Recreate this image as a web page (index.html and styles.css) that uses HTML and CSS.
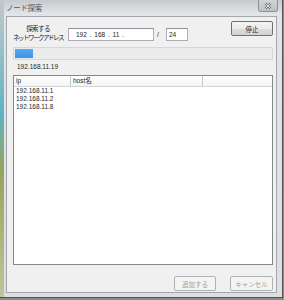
FILE: index.html
```html
<!DOCTYPE html>
<html lang="ja">
<head>
    <meta charset="UTF-8">
    <title>ノード探索</title>
    <link rel="stylesheet" href="styles.css">
</head>
<body>
    <div class="window">
        <div class="titlebar">
            <span class="title">ノード探索</span>
            <span class="close">
                <svg width="20" height="12" viewBox="0 0 20 12">
                    <path d="M7 3 L13 9 M13 3 L7 9" stroke="#6d6d6d" stroke-width="2.4" fill="none"/>
                    <path d="M7 3 L13 9 M13 3 L7 9" stroke="#f4f4f4" stroke-width="1" fill="none"/>
                </svg>
            </span>
        </div>
        <div class="client">
            <div class="top-row">
                <div class="label">探索する<br><span class="narrow">ネットワークアドレス</span></div>
                <div class="textbox ip-box">192 . 168 . 11 .</div>
                <span class="slash">/</span>
                <div class="textbox mask-box">24</div>
                <button class="btn stop">停止</button>
            </div>
            <div class="progress"><div class="bar" style="width: 18px"></div></div>
            <div class="status">192.168.11.19</div>
            <div class="listview">
                <div class="lv-head">
                    <span class="col col-ip">ip</span>
                    <span class="col col-host">host名</span>
                    <span class="col col-rest"></span>
                </div>
                <div class="lv-rows">
                    <div class="lv-row">192.168.11.1</div>
                    <div class="lv-row">192.168.11.2</div>
                    <div class="lv-row">192.168.11.8</div>
                </div>
            </div>
            <div class="footer">
                <button class="btn add" disabled>追加する</button>
                <button class="btn cancel" disabled>キャンセル</button>
            </div>
        </div>
    </div>
</body>
</html>
```

FILE: styles.css
```css
body {
    margin: 0;
    width: 284px;
    height: 300px;
    background-color: #8c8c8c;
    font-family: 'Liberation Sans', 'Noto Sans CJK JP', sans-serif;
    font-size: 6.5px;
    color: #1e1e1e;
    overflow: hidden;
}
.window {
    box-sizing: border-box;
    width: 283px;
    height: 298px;
    padding: 0 5px 4px 6px;
    border-right: 1px solid #505356;
    border-bottom: 1px solid #505356;
    background:
        linear-gradient(#c4c8cc, #5eb4c2 38%, #9aa35c 58%, #c2c39a) left top / 4px 100% no-repeat,
        linear-gradient(#c6cacd, #e2e5e8 14px, #dde0e3);
    display: flex;
    flex-direction: column;
}
.titlebar {
    height: 16px;
    display: flex;
    align-items: flex-start;
    justify-content: space-between;
}
.title {
    font-family: 'Noto Sans CJK JP', sans-serif;
    font-size: 7.5px;
    line-height: 8px;
    margin-top: 4px;
    color: #555;
    letter-spacing: -0.3px;
}
.close {
    width: 20px;
    height: 12px;
    margin-right: -1px;
    box-sizing: border-box;
    border: 1px solid #8d9196;
    border-top: none;
    border-radius: 0 0 3px 3px;
    background: linear-gradient(#d2d4d6, #bfc2c5);
    display: flex;
}
.client {
    flex: 1;
    box-sizing: border-box;
    border: 1px solid #a3a7ab;
    background-color: #f0f0f0;
    padding: 4px 3px 0 5px;
    display: flex;
    flex-direction: column;
}
.top-row {
    height: 21px;
    display: flex;
    align-items: flex-start;
}
.label {
    width: 52px;
    margin-top: 3px;
    text-align: center;
    font-family: 'Noto Sans CJK JP', sans-serif;
    font-size: 6.5px;
    line-height: 8.5px;
    letter-spacing: -0.6px;
}
.narrow {
    letter-spacing: -1.5px;
}
.textbox {
    box-sizing: border-box;
    height: 13px;
    margin-top: 7px;
    border: 1px solid #abadb3;
    border-top-color: #8d9097;
    background-color: #fff;
    line-height: 11px;
    white-space: pre;
}
.ip-box {
    width: 86px;
    margin-left: 4px;
    padding-left: 7px;
    word-spacing: 1px;
}
.mask-box {
    width: 22px;
    padding-left: 2px;
}
.slash {
    width: 12px;
    margin-top: 7px;
    padding-left: 3px;
    box-sizing: border-box;
    line-height: 13px;
}
.btn {
    box-sizing: border-box;
    height: 15px;
    padding: 0;
    border: 1px solid #707070;
    border-radius: 2px;
    background: linear-gradient(#f4f4f4, #ebebeb 50%, #dddddd 51%, #d2d2d2);
    font-family: 'Noto Sans CJK JP', sans-serif;
    font-size: 6.5px;
    color: #1e1e1e;
}
.stop {
    width: 42px;
    margin-left: auto;
}
.progress {
    box-sizing: border-box;
    width: 260px;
    height: 13px;
    margin-top: 5px;
    margin-left: 1px;
    padding: 1px;
    border: 1px solid #d6d6d6;
    border-radius: 1px;
    background-color: #ececec;
}
.bar {
    height: 100%;
    background: linear-gradient(#5aa9f2, #3b93ea);
}
.status {
    height: 10px;
    margin-top: 2px;
    padding-left: 5px;
    line-height: 10px;
}
.listview {
    box-sizing: border-box;
    width: 260px;
    height: 190px;
    margin-top: 3px;
    margin-left: 1px;
    border: 1px solid #828790;
    background-color: #fff;
}
.lv-head {
    height: 10px;
    display: flex;
    border-bottom: 1px solid #d5d5d5;
    background: linear-gradient(#ffffff, #f3f4f6);
}
.col {
    box-sizing: border-box;
    height: 10px;
    padding-left: 2px;
    line-height: 10px;
    font-family: 'Liberation Sans', 'Noto Sans CJK JP', sans-serif;
    border-right: 1px solid #c6c7c9;
}
.col-ip {
    width: 57px;
}
.col-host {
    width: 132px;
}
.col-rest {
    flex: 1;
    border-right: none;
}
.lv-row {
    height: 8px;
    padding-left: 2px;
    line-height: 8px;
}
.footer {
    display: flex;
    justify-content: flex-end;
    gap: 14px;
    margin-top: 11px;
}
.btn:disabled {
    border-color: #adb2b5;
    background: #f4f4f4;
    color: #9d9d9d;
}
.add {
    width: 42px;
}
.cancel {
    width: 43px;
}
```
